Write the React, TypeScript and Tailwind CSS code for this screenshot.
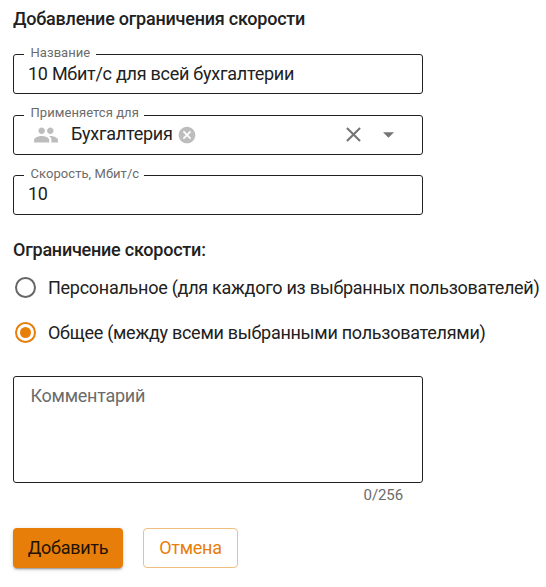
import type { ReactNode } from "react";

function Field({ label, notch, children }: { label: string; notch: string; children: ReactNode }) {
  return (
    <div className="relative flex h-10 w-[410px] items-center rounded-[3px] border border-[#212121]">
      <span
        className={`absolute left-[10px] h-[18px] whitespace-nowrap bg-white pl-[6.5px] text-[13px] leading-[18px] tracking-[0.06px] text-[#6b6b6b] ${notch}`}
      >
        {label}
      </span>
      {children}
    </div>
  );
}

function Radio({ label, checked }: { label: string; checked?: boolean }) {
  return (
    <label className="flex h-[45px] items-center whitespace-nowrap">
      <span
        className={`ml-[2px] mr-[12px] flex size-[21px] shrink-0 items-center justify-center rounded-full border-2 ${
          checked ? "border-[#e77e0a]" : "border-[#666666]"
        }`}
      >
        {checked && <span className="size-[11px] rounded-full bg-[#e77e0a]" />}
      </span>
      <span className="tracking-[-0.27px]">{label}</span>
    </label>
  );
}

export default function App() {
  return (
    <main className="h-[587px] w-[546px] overflow-hidden bg-white pl-[13px] pt-[7px] font-['Roboto',sans-serif] text-[18px] leading-6 tracking-[-0.26px] text-[#212121]">
      <h1 className="h-[47px] text-[18px] font-medium leading-6 tracking-[-0.23px]">Добавление ограничения скорости</h1>

      <div className="flex flex-col">
        <Field label="Название" notch="-top-[11px] w-[72px]">
          <span className="pl-[14px]">10 Мбит/с для всей бухгалтерии</span>
        </Field>
        <div className="h-[21px]" />
        <Field label="Применяется для" notch="-top-[12px] w-[120px]">
          <svg viewBox="0 0 24 24" className="mb-px ml-[19px] size-[26px] shrink-0" fill="#bdbdbd">
            <path d="M16 11c1.66 0 2.99-1.34 2.99-3S17.66 5 16 5s-3 1.34-3 3 1.34 3 3 3zm-8 0c1.66 0 2.99-1.34 2.99-3S9.66 5 8 5 5 6.34 5 8s1.34 3 3 3zm0 2c-2.33 0-7 1.17-7 3.5V19h14v-2.5C15 14.17 10.33 13 8 13zm8 0c-.29 0-.62.02-.97.05 1.16.84 1.97 1.97 1.97 3.45V19h6v-2.5c0-2.33-4.67-3.5-7-3.5z" />
          </svg>
          <span className="ml-[12px] pb-[2px]">Бухгалтерия</span>
          <svg viewBox="0 0 24 24" className="ml-[4px] size-5 shrink-0" fill="#bdbdbd">
            <path d="M12 2C6.47 2 2 6.47 2 12s4.47 10 10 10 10-4.47 10-10S17.53 2 12 2zm5 13.59L15.59 17 12 13.41 8.41 17 7 15.59 10.59 12 7 8.41 8.41 7 12 10.59 15.59 7 17 8.41 13.41 12 17 15.59z" />
          </svg>
          <svg viewBox="0 0 24 24" className="mb-px ml-auto mr-[17px] size-[25px] shrink-0" fill="#757575">
            <path d="M19 6.41 17.59 5 12 10.59 6.41 5 5 6.41 10.59 12 5 17.59 6.41 19 12 13.41 17.59 19 19 17.59 13.41 12z" />
          </svg>
          <svg viewBox="0 0 12 6" className="mr-[28px] h-[6px] w-[11px] shrink-0" fill="#757575">
            <path d="M0 0h12L6 6z" />
          </svg>
        </Field>
        <div className="h-5" />
        <Field label="Скорость, Мбит/с" notch="-top-[11px] w-[120px]">
          <span className="pb-[2px] pl-[14px]">10</span>
        </Field>
      </div>

      <h2 className="mt-[23px] text-[18px] font-medium leading-6 tracking-[-0.23px]">Ограничение скорости:</h2>
      <div className="mt-[3px]">
        <Radio label="Персональное (для каждого из выбранных пользователей)" />
        <Radio checked label="Общее (между всеми выбранными пользователями)" />
      </div>

      <div className="mt-[21px] h-[107px] w-[410px] rounded-[3px] border border-[#212121] pl-[16.5px] pt-[7px] text-[#6b6b6b]">
        Комментарий
      </div>
      <div className="w-[390px] pt-[3px] text-right text-[15px] leading-[18px] tracking-[-0.1px] text-[#6b6b6b]">0/256</div>

      <div className="mt-[24px] flex gap-5">
        <button className="h-10 w-[110px] rounded-[4px] bg-[#e77e0a] tracking-[-0.26px] text-[#211303] shadow-[0_3px_1px_-2px_rgba(0,0,0,0.2),0_2px_2px_rgba(0,0,0,0.14),0_1px_5px_rgba(0,0,0,0.12)]">
          Добавить
        </button>
        <button className="h-10 w-[95px] rounded-[4px] border border-[#f1bd82] tracking-[-0.26px] text-[#e77e0a]">Отмена</button>
      </div>
    </main>
  );
}
